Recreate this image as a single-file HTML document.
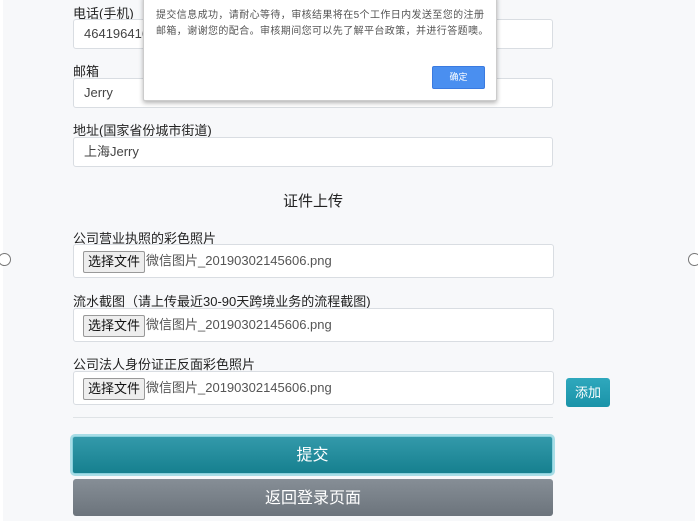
<!DOCTYPE html>
<html><head><meta charset="utf-8"><style>
body{margin:0;width:698px;height:527px;background:#fff;font-family:"Liberation Sans","Noto Sans CJK SC",sans-serif;position:relative;overflow:hidden;color:#212529}
.pg{position:absolute;left:3px;top:0;width:692px;height:521px;background:#f7f8fa}
.a{position:absolute}
.lbl{position:absolute;left:73px;font-size:13px;color:#222}
.in{position:absolute;left:73px;width:478px;height:28px;background:#fff;border:1px solid #d9dde2;border-radius:3px;font-size:13px;color:#444;line-height:28px;padding-left:10px;box-sizing:content-box}
.fi{position:absolute;left:73px;width:479px;height:32px;background:#fff;border:1px solid #d9dde2;border-radius:3px;font-size:13px;color:#555}
.fi span.b{position:absolute;left:9px;top:6px;height:20px;line-height:20px;padding:0 4px;background:#eee;border:1px solid #999;border-radius:2px;color:#111}
.fi span.t{position:absolute;left:72px;top:6px;line-height:20px}
.circ{position:absolute;width:11px;height:11px;border:1px solid #777;border-radius:50%;background:#fff}
</style></head><body>
<div class="pg"></div>
<div class="circ" style="left:-2px;top:253px"></div>
<div class="circ" style="left:688px;top:253px"></div>
<div class="lbl" style="top:3px">电话(手机)</div>
<div class="in" style="top:19px;width:468px">4641964164</div>
<div class="lbl" style="top:61px">邮箱</div>
<div class="in" style="top:78px;width:468px">Jerry</div>
<div class="lbl" style="top:120px">地址(国家省份城市街道)</div>
<div class="in" style="top:137px;width:468px">上海Jerry</div>
<div class="a" style="left:0;width:626px;text-align:center;top:190px;font-size:15px;color:#222">证件上传</div>
<div class="lbl" style="top:228px">公司营业执照的彩色照片</div>
<div class="fi" style="top:244px"><span class="b">选择文件</span><span class="t">微信图片_20190302145606.png</span></div>
<div class="lbl" style="top:291px">流水截图（请上传最近30-90天跨境业务的流程截图)</div>
<div class="fi" style="top:308px"><span class="b">选择文件</span><span class="t">微信图片_20190302145606.png</span></div>
<div class="lbl" style="top:354px">公司法人身份证正反面彩色照片</div>
<div class="fi" style="top:371px"><span class="b">选择文件</span><span class="t">微信图片_20190302145606.png</span></div>
<div class="a" style="left:566px;top:378px;width:44px;height:29px;background:linear-gradient(#2fa8bd,#1a93a8);border-radius:3px;color:#fff;font-size:13px;line-height:29px;text-align:center">添加</div>
<div class="a" style="left:73px;top:417px;width:480px;height:1px;background:#dfe3e6"></div>
<div class="a" style="left:72px;top:436px;width:479px;height:36px;background:linear-gradient(#3399aa,#16808f);border:1px solid #88d0dc;box-shadow:0 0 0 2px #a8dde6;border-radius:3px;color:#fff;font-size:16px;line-height:38px;text-align:center">提交</div>
<div class="a" style="left:73px;top:479px;width:480px;height:37px;background:linear-gradient(#868e96,#6c747c);border-radius:3px;color:#fff;font-size:16px;line-height:39px;text-align:center">返回登录页面</div>
<div class="a" style="left:143px;top:-5px;width:352px;height:104px;background:#fff;border:1px solid #ccc;box-shadow:0 2px 5px rgba(0,0,0,.3);border-radius:2px">
<div class="a" style="left:12px;top:12px;white-space:nowrap;font-size:10px;letter-spacing:0.4px;line-height:16px;color:#555">提交信息成功，请耐心等待，审核结果将在5个工作日内发送至您的注册<br>邮箱，谢谢您的配合。审核期间您可以先了解平台政策，并进行答题噢。</div>
<div class="a" style="left:288px;top:70px;width:51px;height:21px;background:#4a8ff0;border:1px solid #3a7ae0;border-radius:2px;color:#fff;font-size:9px;line-height:21px;text-align:center">确定</div>
</div>
</body></html>
